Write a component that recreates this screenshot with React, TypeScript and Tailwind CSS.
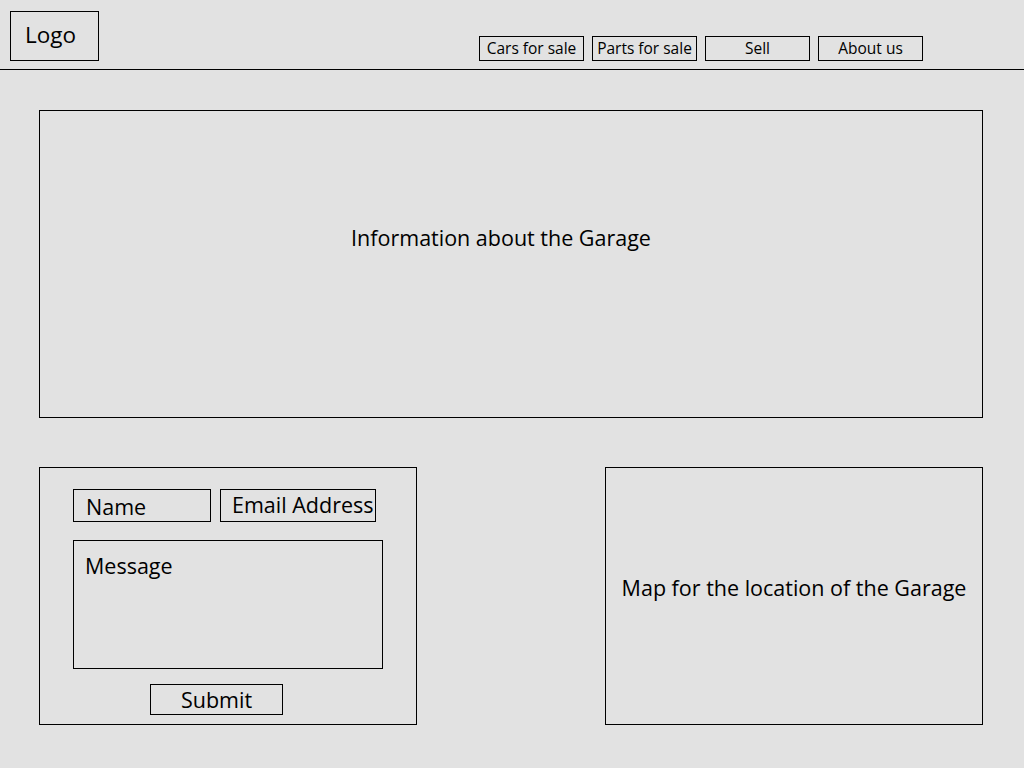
export default function App() {
  const navItems = ['Cars for sale', 'Parts for sale', 'Sell', 'About us'];

  return (
    <div
      className="w-[1024px] h-[768px] bg-[#e2e2e2] text-black overflow-hidden"
      style={{ fontFamily: '"Open Sans", "Liberation Sans", sans-serif' }}
    >
      {/* Header */}
      <header className="h-[70px] border-b border-black flex items-start">
        <div className="ml-[10px] mt-[11px] w-[89px] h-[50px] border border-black flex items-center pl-[14px] text-[22.5px] leading-none pb-[1px]">
          Logo
        </div>
        <nav className="ml-[380px] mt-[36px] flex gap-[8px]">
          {navItems.map((item) => (
            <button
              key={item}
              className="w-[105px] h-[25px] border border-black flex items-center justify-center text-[15.5px] leading-none"
            >
              {item}
            </button>
          ))}
        </nav>
      </header>

      <main className="pl-[39px] w-[983px]">
        {/* Info */}
        <section className="mt-[40px] h-[308px] border border-black flex justify-center pt-[115px] pr-[20px]">
          <p className="text-[21.5px] leading-[24px]">Information about the Garage</p>
        </section>

        {/* Bottom row */}
        <div className="mt-[49px] flex justify-between">
          <form className="w-[378px] h-[258px] border border-black pl-[33px] pt-[21px]">
            <div className="flex gap-[9px]">
              <div className="w-[138px] h-[33px] border border-black pl-[12px] pt-[3px] text-[21.5px] leading-[28px]">
                Name
              </div>
              <div className="w-[156px] h-[33px] border border-black pl-[11px] pt-[1px] text-[21.5px] leading-[28px] whitespace-nowrap">
                Email Address
              </div>
            </div>
            <div className="mt-[18px] w-[310px] h-[129px] border border-black pl-[11px] pt-[11px] text-[21.5px] leading-[28px]">
              Message
            </div>
            <button
              type="button"
              className="mt-[15px] ml-[77px] w-[133px] h-[31px] border border-black flex items-center justify-center text-[21.5px] leading-none pt-[1px]"
            >
              Submit
            </button>
          </form>

          <section className="w-[378px] h-[258px] border border-black flex items-center justify-center pb-[16px]">
            <p className="text-[21.5px] leading-[24px]">Map for the location of the Garage</p>
          </section>
        </div>
      </main>
    </div>
  );
}
